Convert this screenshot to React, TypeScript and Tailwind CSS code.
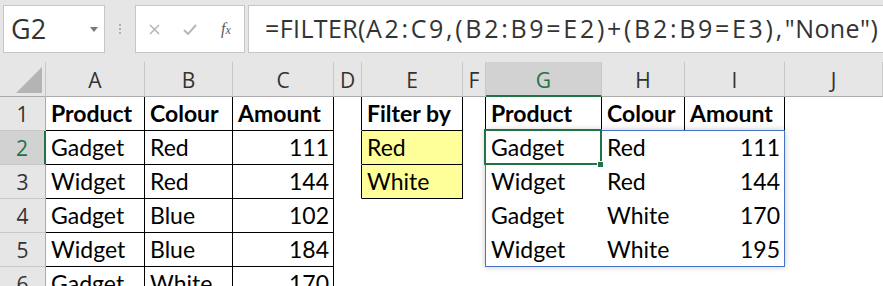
import React from "react";

type CellDef = {
  t?: string;
  bold?: boolean;
  num?: boolean;
  r?: boolean;
  b?: boolean;
  yellow?: boolean;
};

const COLS = ["A", "B", "C", "D", "E", "F", "G", "H", "I", "J"];

const box = (t: string, bold = false): CellDef => ({ t, bold, r: true, b: true });
const numBox = (t: string): CellDef => ({ t, num: true, r: true, b: true });

const ROWS: CellDef[][] = [
  [box("Product", true), box("Colour", true), box("Amount", true), { r: true }, box("Filter by", true), { r: true }, box("Product", true), box("Colour", true), box("Amount", true), {}],
  [box("Gadget"), box("Red"), numBox("111"), { r: true }, { ...box("Red"), yellow: true }, {}, { t: "Gadget" }, { t: "Red" }, { t: "111", num: true }, {}],
  [box("Widget"), box("Red"), numBox("144"), { r: true }, { ...box("White"), yellow: true }, {}, { t: "Widget" }, { t: "Red" }, { t: "144", num: true }, {}],
  [box("Gadget"), box("Blue"), numBox("102"), {}, {}, {}, { t: "Gadget" }, { t: "White" }, { t: "170", num: true }, {}],
  [box("Widget"), box("Blue"), numBox("184"), {}, {}, {}, { t: "Widget" }, { t: "White" }, { t: "195", num: true }, {}],
  [box("Gadget"), box("White"), numBox("170"), {}, {}, {}, {}, {}, {}, {}],
];

function Cell({ c }: { c: CellDef }) {
  return (
    <div
      className={`box-border overflow-hidden whitespace-nowrap border-r border-b font-[Lato,sans-serif] text-[23px] leading-[33px] text-black ${
        c.r ? "border-r-black" : "border-r-transparent"
      } ${c.b ? "border-b-black" : "border-b-transparent"} ${c.yellow ? "bg-[#ffff99]" : "bg-white"} ${
        c.num ? "pr-[4px] text-right" : "pl-[5px]"
      } ${c.bold ? "font-bold" : ""}`}
    >
      {c.t}
    </div>
  );
}

function TopBar() {
  return (
    <div className="flex h-[62px] items-start bg-[#e6e6e6] pt-[5px] font-['Open_Sans',sans-serif]">
      <div className="ml-[3px] flex h-[48px] w-[102px] items-center justify-between border border-[#c6c6c6] bg-white pl-[7px] pr-[6px]">
        <span className="text-[27px] text-[#333]">G2</span>
        <svg width="8" height="5" viewBox="0 0 8 5">
          <path d="M0 0H8L4 5Z" fill="#7a7a7a" />
        </svg>
      </div>
      <div className="flex h-[48px] w-[30px] flex-col items-center justify-center gap-[2px]">
        <span className="size-[2px] bg-[#b0b0b0]" />
        <span className="size-[2px] bg-[#b0b0b0]" />
        <span className="size-[2px] bg-[#b0b0b0]" />
      </div>
      <div className="flex h-[48px] w-[110px] items-center border border-[#c6c6c6] bg-white">
        <div className="flex w-[36px] justify-center">
          <svg width="11" height="11" viewBox="0 0 11 11">
            <path d="M1 1L10 10M10 1L1 10" stroke="#b0b0b0" strokeWidth="1.4" />
          </svg>
        </div>
        <div className="flex w-[36px] justify-center">
          <svg width="14" height="11" viewBox="0 0 14 11">
            <path d="M1 6L5 10L13 1" stroke="#b8b8b8" strokeWidth="2" fill="none" />
          </svg>
        </div>
        <div className="flex w-[36px] justify-center font-['Liberation_Serif',serif] italic text-[#5a5a5a]">
          <span className="text-[16px] leading-none">f</span>
          <span className="mt-[3px] text-[12px] leading-none">x</span>
        </div>
      </div>
      <div className="ml-[3px] flex h-[48px] flex-1 items-center border-y border-l border-[#c6c6c6] bg-white pl-[16px] text-[25px] whitespace-nowrap text-[#333]">
        <span className="tracking-[0.4px]">=FILTER(</span>
        <span className="tracking-[2.7px]">A2:C9,(B2:B9=E2)+(B2:B9=E3),</span>
        <span className="tracking-[0.4px]">"None")</span>
      </div>
    </div>
  );
}

export default function App() {
  return (
    <div className="h-[286px] w-[883px] overflow-hidden bg-white">
      <TopBar />
      <div className="relative grid grid-cols-[46px_99px_88px_101px_28px_101px_23px_116px_83px_100px_1fr] grid-rows-[35px_repeat(6,34px)]">
        {/* corner */}
        <div className="box-border flex items-end justify-end border-r border-b border-r-[#c8c8c8] border-b-[#ababab] bg-[#e6e6e6] pr-[3px] pb-[3px]">
          <svg width="26" height="26" viewBox="0 0 26 26">
            <path d="M26 0V26H0Z" fill="#b4b4b4" />
          </svg>
        </div>
        {COLS.map((c) =>
          c === "G" ? (
            <div
              key={c}
              className="box-border border-r border-b-2 border-r-[#c8c8c8] border-b-[#217346] bg-[#d2d2d2] pt-[2px] text-center font-['Open_Sans',sans-serif] text-[21px] leading-[33px] text-[#217346]"
            >
              {c}
            </div>
          ) : (
            <div
              key={c}
              className="box-border border-r border-b border-r-[#c8c8c8] border-b-[#ababab] bg-[#e6e6e6] pt-[2px] text-center font-['Open_Sans',sans-serif] text-[21px] leading-[33px] text-[#333]"
            >
              {c}
            </div>
          )
        )}
        {ROWS.map((row, i) => (
          <React.Fragment key={i}>
            {i === 1 ? (
              <div className="box-border border-r-2 border-b border-r-[#217346] border-b-[#c8c8c8] bg-[#d2d2d2] pt-[1px] text-center font-['Open_Sans',sans-serif] text-[21px] leading-[33px] text-[#217346]">
                {i + 1}
              </div>
            ) : (
              <div className="box-border border-r border-b border-r-[#ababab] border-b-[#c8c8c8] bg-[#e6e6e6] pt-[1px] text-center font-['Open_Sans',sans-serif] text-[21px] leading-[33px] text-[#333]">
                {i + 1}
              </div>
            )}
            {row.map((c, j) => (
              <Cell key={j} c={c} />
            ))}
          </React.Fragment>
        ))}

        {/* spill range of the FILTER result */}
        <div className="pointer-events-none absolute top-[68px] left-[485px] h-[137px] w-[300px] border border-[#4472c4] shadow-[0_0_6px_rgba(0,0,0,0.22)]" />
        {/* active cell G2 */}
        <div className="pointer-events-none absolute top-[67px] left-[484px] h-[36px] w-[118px] border-2 border-[#217346]" />
        <div className="pointer-events-none absolute top-[99px] left-[597px] size-[7px] border border-white bg-[#217346]" />
      </div>
    </div>
  );
}
